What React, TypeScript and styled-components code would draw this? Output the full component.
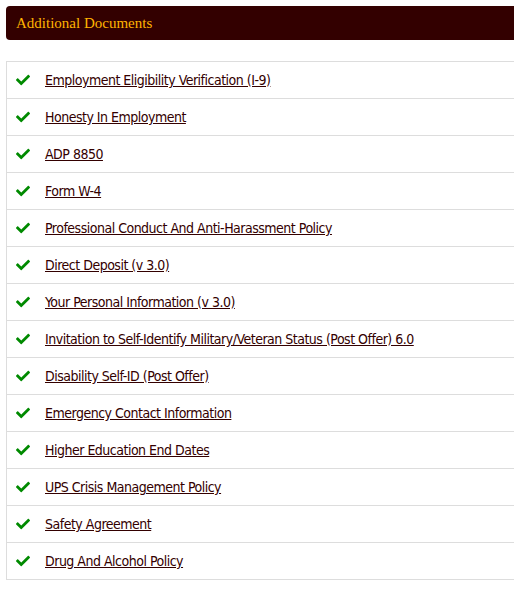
import styled, { createGlobalStyle } from 'styled-components';
import { FaCheck } from 'react-icons/fa';

const COLORS = {
  MAROON: '#330000',
  GOLD: '#ffb400',
  GREEN: '#008a00',
  LINE: '#dddddd'
};

const documents = [
  'Employment Eligibility Verification (I-9)',
  'Honesty In Employment',
  'ADP 8850',
  'Form W-4',
  'Professional Conduct And Anti-Harassment Policy',
  'Direct Deposit (v 3.0)',
  'Your Personal Information (v 3.0)',
  'Invitation to Self-Identify Military/Veteran Status (Post Offer) 6.0',
  'Disability Self-ID (Post Offer)',
  'Emergency Contact Information',
  'Higher Education End Dates',
  'UPS Crisis Management Policy',
  'Safety Agreement',
  'Drug And Alcohol Policy'
];

function App() {
  return (
    <>
      <GlobalStyle />
      <Page>
        <Header>
          <HeaderTitle>Additional Documents</HeaderTitle>
        </Header>
        <DocList>
          {documents.map((name) => (
            <DocItem key={name}>
              <FaCheck size={14} color={COLORS.GREEN} />
              <DocLink href="#">{name}</DocLink>
            </DocItem>
          ))}
        </DocList>
      </Page>
    </>
  );
}

const GlobalStyle = createGlobalStyle`
  body {
    margin: 0;
    background: #ffffff;
  }
`;

const Page = styled.div`
  display: flex;
  flex-direction: column;
  padding: 6px 0 0 6px;
  width: 520px;
  gap: 21px;
`;

const Header = styled.div`
  display: flex;
  align-items: center;
  height: 34px;
  padding: 0 10px;
  background-color: ${COLORS.MAROON};
  border-radius: 4px;
`;

const HeaderTitle = styled.h3`
  margin: 0;
  font-family: 'Liberation Serif', serif;
  font-size: 15px;
  font-weight: normal;
  color: ${COLORS.GOLD};
`;

const DocList = styled.ul`
  list-style: none;
  margin: 0;
  padding: 0;
  border: 1px solid ${COLORS.LINE};
  border-right: none;
`;

const DocItem = styled.li`
  display: flex;
  align-items: center;
  gap: 15px;
  height: 36px;
  padding: 0 9px;
  border-top: 1px solid ${COLORS.LINE};

  &:first-child {
    border-top: none;
  }
`;

const DocLink = styled.a`
  font-family: 'DejaVu Sans Condensed', 'DejaVu Sans', sans-serif;
  font-stretch: condensed;
  font-size: 14px;
  letter-spacing: -0.5px;
  color: ${COLORS.MAROON};
  text-decoration: underline;
`;

export default App;
